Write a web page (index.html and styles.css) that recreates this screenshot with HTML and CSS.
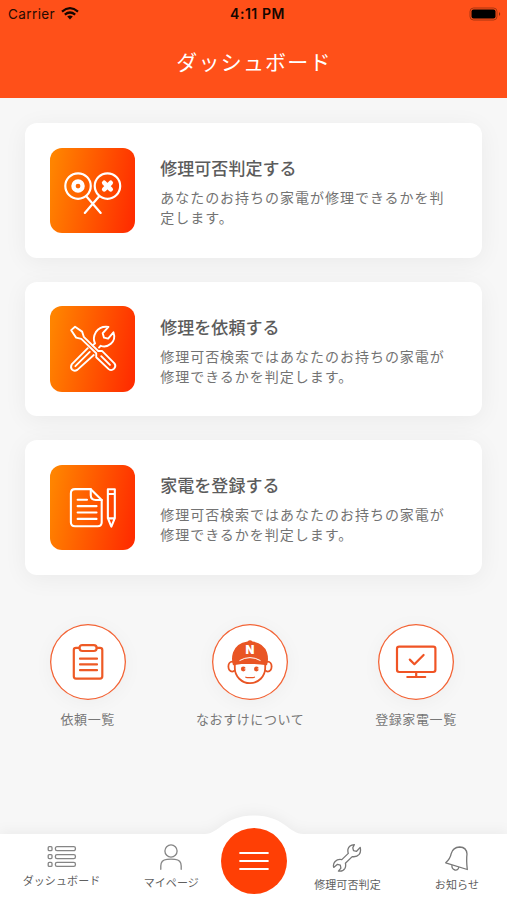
FILE: index.html
```html
<!DOCTYPE html>
<html lang="ja">
<head>
<meta charset="utf-8">
<title>ダッシュボード</title>
<link rel="stylesheet" href="styles.css">
</head>
<body>
<div class="app">
  <header class="header">
    <div class="status">
      <div class="carrier"><span>Carrier</span>
        <svg width="18" height="13" viewBox="0 0 18 13"><g fill="none" stroke="#160600" stroke-width="2.2"><path d="M1 4.6Q9 -2.2 17 4.6"/><path d="M3.8 7.6Q9 3.4 14.2 7.6"/></g><path d="M6.2 9.6Q9 7.4 11.8 9.6L9 12.5Z" fill="#160600"/></svg>
      </div>
      <time class="clock">4:11 PM</time>
      <svg class="battery" width="33" height="14" viewBox="0 0 33 14"><rect x="1" y="1" width="27" height="12" rx="3.5" fill="none" stroke="#a83510"/><rect x="2.5" y="2.5" width="24" height="9" rx="2" fill="#000"/><path d="M30 5Q32.4 7 30 9Z" fill="#8e2c0c"/></svg>
    </div>
    <h1 class="title">ダッシュボード</h1>
  </header>

  <main class="main">
    <section class="cards">
      <a class="card">
        <svg class="tile" viewBox="0 0 86 86"><g fill="none" stroke="#fff" stroke-width="2.2" stroke-linecap="round"><circle cx="28.2" cy="38.3" r="12.8"/><circle cx="57.8" cy="38.3" r="12.8"/><path d="M36.5 48.5 51 65.3M49.5 48.5 35 65.3"/><circle cx="28.2" cy="38.3" r="4.6" stroke-width="4.4"/><path d="M54.5 35l6.6 6.6m0-6.6-6.6 6.6" stroke-width="4.6"/></g></svg>
        <div class="copy"><h2>修理可否判定する</h2><p>あなたのお持ちの家電が修理できるかを判定します。</p></div>
      </a>
      <a class="card">
        <svg class="tile" viewBox="0 0 86 86"><g fill="none" stroke="#fff" stroke-width="1.9" stroke-linejoin="round" stroke-linecap="round"><path d="M21.3 24.3 25.2 20.9 32.3 25.8 34 31 48.5 45.3 52.3 45.2 64.8 57.7Q66.8 60.3 64.5 63Q61.8 65.7 59 63.5L46.5 51.5V47.5L31.5 33 26.3 31.8Z"/><path d="M51.5 50.5 60.3 59.3"/><path d="M45.2 37.6Q42.7 31.7 46.1 26.3Q50.5 19.9 58.8 21.1L53 27.4 54.3 31.8 58.5 32.8 63.8 26.5Q66.3 33.5 61.2 38Q56.6 42 51 40L49.3 41.8"/><path d="M45.2 37.6 43 39.5M38 42.4 21.8 58.8Q20.2 62 22.2 64Q24.5 66 27.5 64.2L44 49.3M25.5 60.5 40 46.2"/></g></svg>
        <div class="copy"><h2>修理を依頼する</h2><p>修理可否検索ではあなたのお持ちの家電が修理できるかを判定します。</p></div>
      </a>
      <a class="card">
        <svg class="tile" viewBox="0 0 86 86"><g fill="none" stroke="#fff" stroke-width="2.1" stroke-linejoin="round" stroke-linecap="round"><path d="M41 24.3H25.2Q21 24.3 21 28.5V57.5Q21 61.6 25.2 61.6H48Q52 61.6 52 57.5V35.2Z"/><path d="M41 24.3V30.5Q41 35.2 46 35.2H52M27.8 35H37.2M27.8 41.4H46.8M27.8 47.8H46.8M27.8 54.2H46.8"/><path d="M58.2 24.4H65.2V53.5L61.7 62 58.2 53.5ZM58.2 29.2H65.2M58.5 53.7H65"/></g></svg>
        <div class="copy"><h2>家電を登録する</h2><p>修理可否検索ではあなたのお持ちの家電が修理できるかを判定します。</p></div>
      </a>
    </section>

    <section class="shortcuts">
      <a class="shortcut">
        <svg class="disc" viewBox="0 0 76 76"><g fill="none" stroke="#ee5a25" stroke-width="2.2" stroke-linejoin="round" stroke-linecap="round"><path d="M29.5 23.8H26Q23.8 23.8 23.8 26V52.3Q23.8 54.6 26 54.6H50Q52.3 54.6 52.3 52.3V26Q52.3 23.8 50 23.8H46.7"/><path d="M32.5 21.1H43.7Q46.7 21.1 46.7 24T43.7 27H32.5Q29.5 27 29.5 24T32.5 21.1Z"/><path d="M30 34.7H47M30 40.4H47M30 46.2H47"/></g></svg>
        <span>依頼一覧</span>
      </a>
      <a class="shortcut">
        <svg class="disc" viewBox="0 0 76 76"><g fill="#fff" stroke="#e95524" stroke-width="1.8"><ellipse cx="20.2" cy="42.6" rx="3.8" ry="5"/><ellipse cx="55.8" cy="42.6" rx="3.8" ry="5"/><path d="M22.8 39V44A15.2 15.2 0 0 0 53.2 44V39Z"/></g><path d="M21 41.2Q19 35 21 28.5Q24.3 18.9 35.5 17.4Q38 15 40.5 17.4Q51.7 18.9 55 28.5Q57 35 55 41.2Q38 38.4 21 41.2Z" fill="#e95524"/><path d="M27.5 36.6Q38 30.6 48.5 36.6" fill="none" stroke="#fff" stroke-width="1"/><g fill="#e95524"><circle cx="31.3" cy="45" r="2.4"/><circle cx="44.4" cy="45" r="2.4"/></g><path d="M32.5 44.9h2M45.6 44.9h2" stroke="#fff"/><path d="M33.5 52.7Q34 53.8 36 53.6H40Q42.2 53.8 42.7 52.7" fill="none" stroke="#e95524" stroke-width="1.2"/><text class="cap-letter" x="38" y="30">N</text></svg>
        <span>なおすけについて</span>
      </a>
      <a class="shortcut">
        <svg class="disc" viewBox="0 0 76 76"><g fill="none" stroke="#f05425" stroke-width="2.2" stroke-linejoin="round" stroke-linecap="round"><rect x="19" y="22.6" width="38.4" height="25.4" rx="2.2"/><path d="M38.2 48V53M29.3 53H47.2"/><path d="M31.8 35.6 36.4 40.2 45.6 31" stroke-width="2.2"/></g></svg>
        <span>登録家電一覧</span>
      </a>
    </section>
  </main>

  <nav class="nav">
    <svg class="nav-bg" viewBox="0 0 507 90"><path d="M0 24H205C219 24 224 5.5 254 5.5S289 24 303 24H507V90H0Z" fill="#fff"/></svg>
    <a class="nav-item first">
      <svg width="30" height="24" viewBox="0 0 30 24"><g fill="none" stroke="#858585" stroke-width="1.3"><rect x="1.2" y="1.7" width="3.8" height="4" rx="1"/><rect x="8.4" y="1.7" width="20" height="4" rx="1.6"/><rect x="1.2" y="9.6" width="3.8" height="4" rx="1"/><rect x="8.4" y="9.6" width="20" height="4" rx="1.6"/><rect x="1.2" y="17.4" width="3.8" height="4" rx="1"/><rect x="8.4" y="17.4" width="20" height="4" rx="1.6"/></g></svg>
      <span>ダッシュボード</span>
    </a>
    <a class="nav-item second">
      <svg width="24" height="28" viewBox="0 0 24 28"><g fill="none" stroke="#858585" stroke-width="1.3" stroke-linecap="round"><circle cx="12" cy="8" r="6.1"/><path d="M1.8 26.3V23Q1.8 16.8 8 16.3Q12 15.9 16 16.3Q22.2 16.8 22.2 23V26.3"/></g></svg>
      <span>マイページ</span>
    </a>
    <a class="fab"><svg width="30" height="20" viewBox="0 0 30 20"><path d="M1.2 2H28.8M1.2 10H28.8M1.2 18H28.8" stroke="#fff" stroke-width="2.2" stroke-linecap="round"/></svg></a>
    <a class="nav-item">
      <svg width="30" height="30" viewBox="0 0 30 30"><path d="M22.3 1.6Q17 2.1 16 6.2Q15.6 8.4 16.3 10.4L9.8 16.6Q5.7 15.8 3.1 18.5Q.7 21.2 1.7 24.4L5.5 21.3 8.3 22.2 8.9 25.2 6.4 28.1Q11 28.8 13 25.2Q14.1 22.9 13.4 20.2L20.2 13.6Q24.5 14.4 27.2 11.4Q29.2 8.9 28.2 4.4L24.6 8.3 21.5 7.7 20.8 4.8Z" fill="none" stroke="#777" stroke-width="1.3" stroke-linejoin="round"/></svg>
      <span>修理可否判定</span>
    </a>
    <a class="nav-item bell">
      <svg width="26" height="28" viewBox="0 0 26 28"><g fill="none" stroke="#777" stroke-width="1.3" stroke-linejoin="round"><path d="M1.7 17.8Q6.2 14 7.2 8.7Q8.9 2.2 15.7 2Q22.6 2.3 23 9Q22.2 15.2 23.3 24.5Z"/><path d="M8 20.2Q7.4 24 11 25Q14.3 25.5 14.8 22"/></g></svg>
      <span>お知らせ</span>
    </a>
  </nav>
</div>
</body>
</html>
```

FILE: styles.css
```css
* { box-sizing: border-box; margin: 0; padding: 0; }

body {
  font-family: "Noto Sans CJK JP", sans-serif;
  background: #f7f7f7;
  color: #6b6b6b;
}

svg { display: block; }

.app {
  width: 507px;
  height: 900px;
  display: flex;
  flex-direction: column;
  overflow: hidden;
}

.header {
  height: 98.4px;
  flex: none;
  background: #ff5019;
}

.status {
  height: 27px;
  padding: 0 5px 0 8px;
  display: grid;
  grid-template-columns: 1fr auto 1fr;
  align-items: center;
  font-family: Inter, sans-serif;
  font-size: 13.5px;
  color: #280b02;
}

.carrier { display: flex; align-items: center; gap: 6px; letter-spacing: .4px; }
.clock { padding-left: 5px; font-size: 14px; font-weight: 600; letter-spacing: .55px; color: #160600; }
.battery { justify-self: end; }

.title {
  height: 68px;
  line-height: 68px;
  padding-left: 1px;
  text-align: center;
  font-size: 21px;
  font-weight: 400;
  letter-spacing: 1.2px;
  color: #fff;
}

.main { flex: 1; padding: 24.6px 24.8px 0 25.4px; }
.cards { display: flex; flex-direction: column; gap: 24px; }

.card {
  height: 134.7px;
  display: flex;
  align-items: center;
  gap: 25px;
  padding: 0 24.3px;
  border-radius: 12px;
  background: #fff;
  box-shadow: 0 4px 24px rgba(0, 0, 0, .055);
}

.tile {
  width: 85.5px;
  height: 85.5px;
  flex: none;
  border-radius: 12px;
  background: linear-gradient(100deg, #ff8400 5%, #ff2d00 95%);
}

.copy { width: 290px; padding-top: 2px; }

.copy h2 {
  font-size: 17px;
  line-height: 24px;
  font-weight: 500;
  letter-spacing: .05px;
  color: #5c5c5c;
}

.copy p {
  margin-top: 7px;
  font-size: 14px;
  line-height: 20px;
  letter-spacing: .98px;
  color: #737373;
}

.shortcuts {
  display: grid;
  grid-template-columns: 124.6px 200.4px 131.2px;
  margin-top: 49.2px;
}

.shortcut {
  display: flex;
  flex-direction: column;
  align-items: center;
  gap: 8px;
  font-size: 13px;
  line-height: 22px;
  letter-spacing: .6px;
  color: #777;
}

.disc {
  width: 76px;
  height: 76px;
  border-radius: 50%;
  background: #fff;
  box-shadow: inset 0 0 0 1.3px #f26335, 0 3px 20px rgba(0, 0, 0, .04);
}

.cap-letter {
  font: 900 11.5px Inter, sans-serif;
  letter-spacing: 0;
  text-anchor: middle;
  fill: #fff;
}

.nav {
  position: relative;
  height: 90px;
  flex: none;
  display: grid;
  grid-template-columns: 123px 96.6px 68.4px 119px 100px;
}

.nav-bg {
  position: absolute;
  inset: 0;
  width: 507px;
  height: 90px;
  filter: drop-shadow(0 -3px 6px rgba(0, 0, 0, .045));
}

.nav-item {
  position: relative;
  display: flex;
  flex-direction: column;
  align-items: center;
  justify-content: flex-end;
  gap: 3px;
  padding-bottom: 8px;
  font-size: 11px;
  line-height: 16px;
  letter-spacing: .1px;
  color: #606060;
}

.first { padding-bottom: 12px; }
.second { padding-bottom: 10px; }
.bell { letter-spacing: .2px; }

.fab {
  position: relative;
  width: 66px;
  height: 66px;
  margin-top: 18px;
  justify-self: center;
  display: grid;
  place-items: center;
  border-radius: 50%;
  background: #ff3f05;
}
```
